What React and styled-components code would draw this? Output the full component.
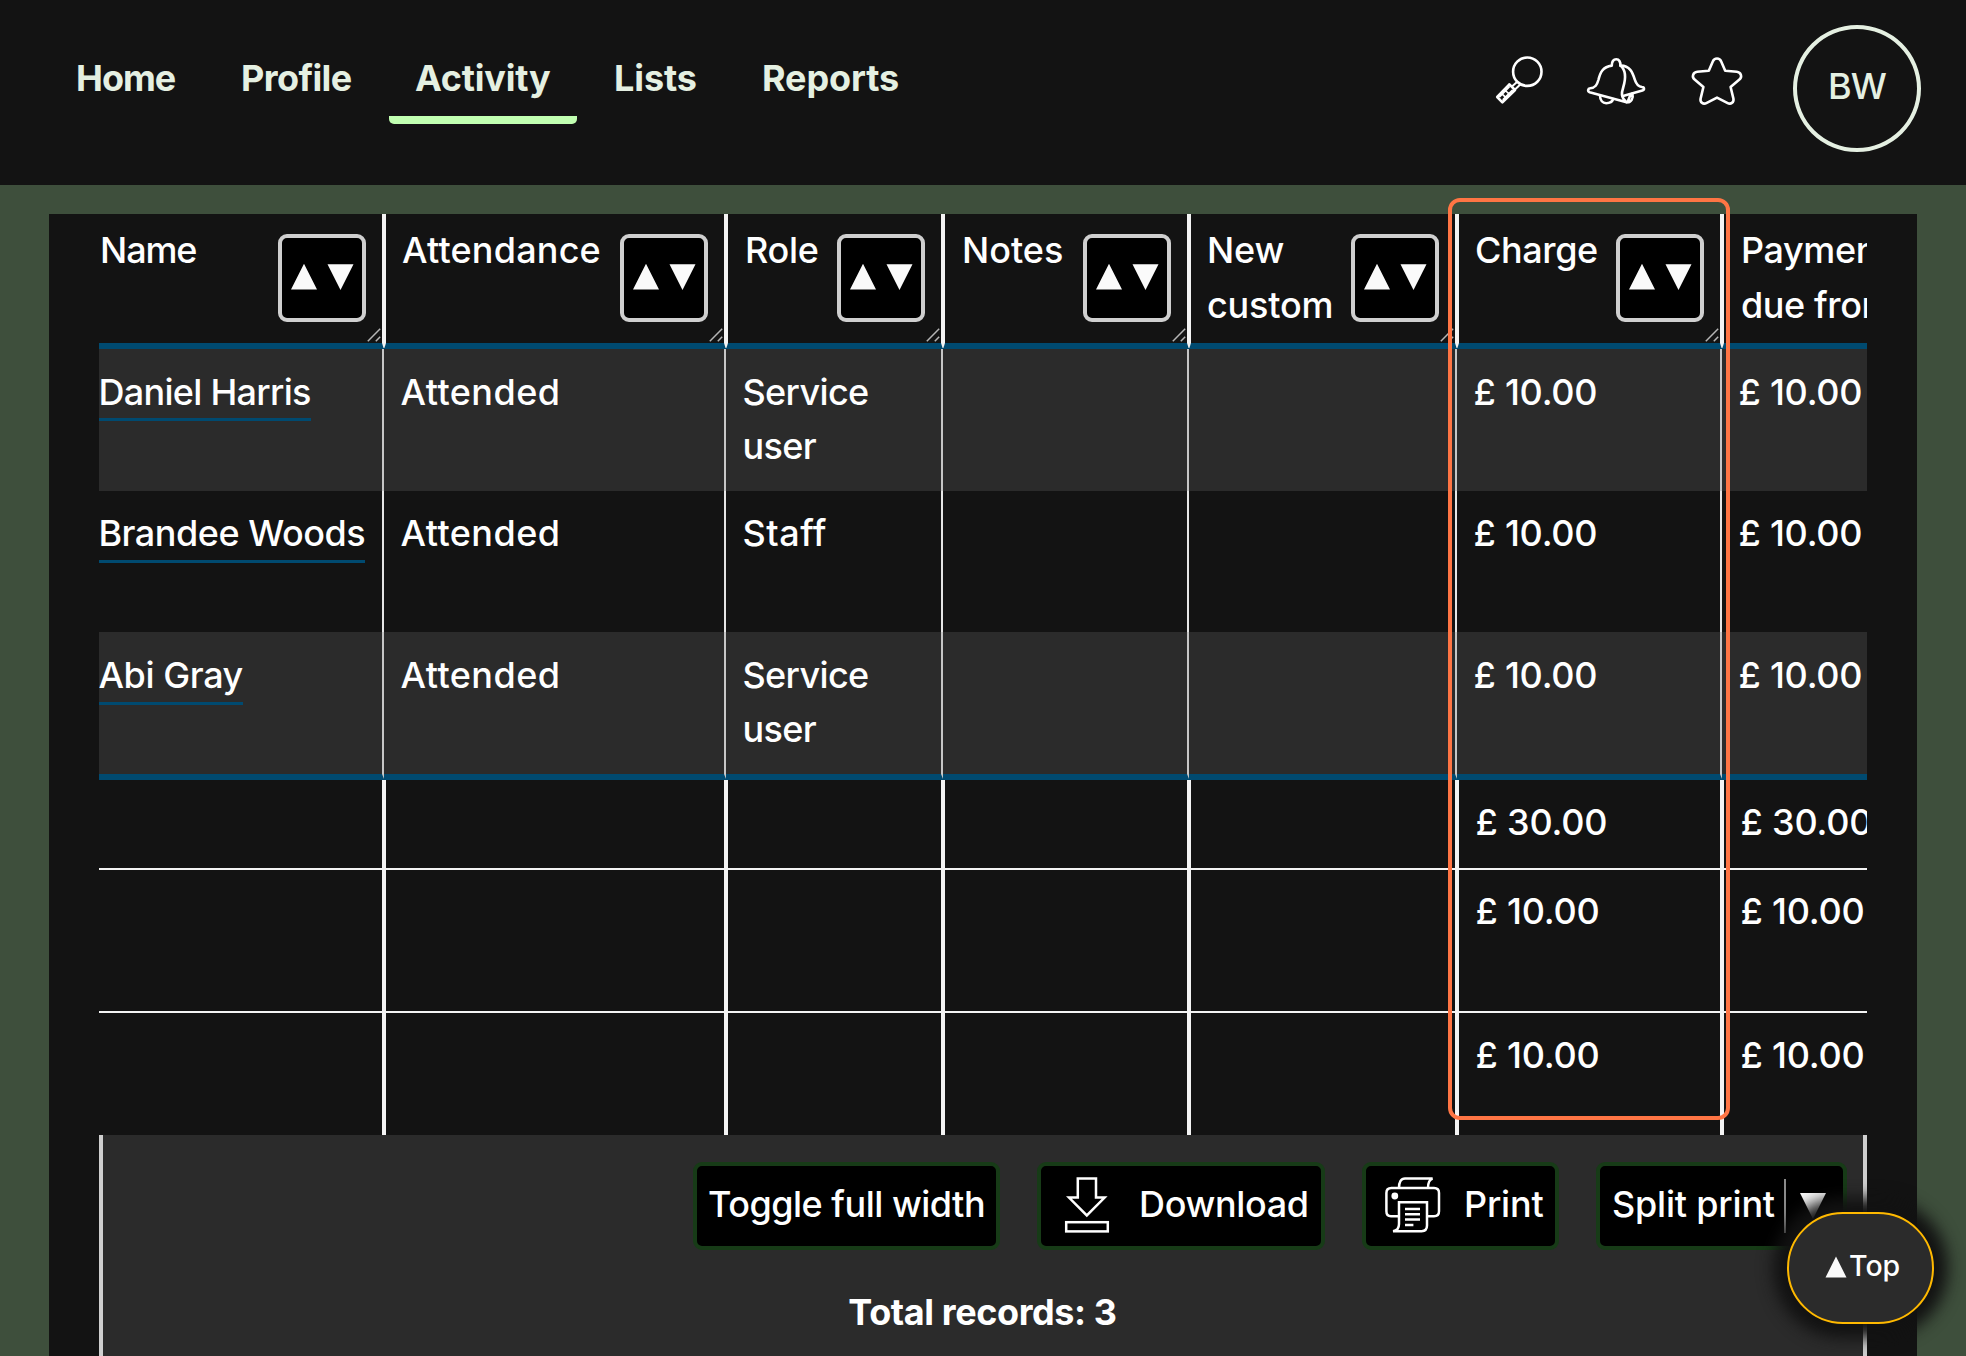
import React from "react";
import styled, { createGlobalStyle, css } from "styled-components";

const colors = {
  ink: "#131313",
  panel: "#2b2b2b",
  moss: "#3e4f3c",
  mint: "#e5f0e2",
  lime: "#c1ffb1",
  blue: "#004a70",
  line: "#f4f4f4",
  soft: "#cfcfcf",
  orange: "#ff7544",
  amber: "#ffb900",
};

const COLUMNS = "287px 342px 217px 246px 268px 265px 300px";
const BODY_COLUMNS = "285px 342px 217px 246px 268px 265px 302px";

const GlobalStyle = createGlobalStyle`
  *, *::before, *::after { box-sizing: border-box; }
  html, body { margin: 0; padding: 0; background: ${colors.moss}; }
  body { overflow: hidden; }
`;

const Page = styled.div`
  position: relative;
  width: 1966px;
  height: 1356px;
  overflow: hidden;
  background: ${colors.moss};
  color: #fff;
  font-family: Inter, "Liberation Sans", sans-serif;
  font-size: 36px;
  font-weight: 500;
  line-height: 54.4px;
`;

const TopBar = styled.header`
  display: flex;
  justify-content: space-between;
  align-items: flex-start;
  height: 185px;
  padding: 0 45px 0 50px;
  background: ${colors.ink};
  color: ${colors.mint};
`;

const Nav = styled.nav`
  display: grid;
  grid-template-columns: 165px 174px 199px 148px 200px;
  padding-top: 51px;
`;

const NavItem = styled.a`
  justify-self: start;
  height: 73px;
  padding: 0 26px;
  border-bottom: 8px solid ${(p) => (p.$active ? colors.lime : "transparent")};
  border-radius: 0 0 5px 5px;
  font-weight: 650;
  letter-spacing: ${(p) => p.$track || 0}px;
  white-space: nowrap;
  ${(p) => p.$active && css`width: 188px;`}
`;

const Tools = styled.div`
  display: grid;
  grid-template-columns: 90px 105px 103px 128px;
  padding-top: 25px;
`;

const ToolIcon = styled.svg`
  display: block;
  height: 52px;
  margin-top: 30px;
  fill: none;
  stroke: #fff;
  stroke-width: 2.6;
  stroke-linejoin: round;
  stroke-linecap: round;
`;

const Avatar = styled.div`
  display: flex;
  align-items: center;
  justify-content: center;
  width: 128px;
  height: 127px;
  padding-bottom: 4px;
  border: 4px solid ${colors.mint};
  border-radius: 50%;
  letter-spacing: -0.8px;
`;

const Card = styled.main`
  margin: 29px 49px 0;
  padding: 0 50px;
  background: ${colors.ink};
`;

const TableWindow = styled.div`
  width: 1768px;
  overflow: hidden;
`;

const HeadRow = styled.div`
  display: grid;
  grid-template-columns: ${COLUMNS};
  height: 135px;
  border-bottom: 6px solid ${colors.blue};
  line-height: 55px;
`;

const HeadCell = styled.div`
  position: relative;
  display: flex;
  justify-content: space-between;
  align-items: flex-start;
  padding: 8.6px 16px 0 ${(p) => (p.$first ? 1 : 16)}px;
  border-right: 4px solid ${colors.line};
  white-space: pre;

  &::after {
    content: "";
    position: absolute;
    top: 100%;
    right: -4px;
    width: 4px;
    height: 5px;
    background: ${colors.line};
    clip-path: polygon(0 0, 100% 0, 60% 100%, 40% 100%);
  }
`;

const HeadText = styled.span`
  padding-left: ${(p) => p.$nudge || 0}px;
  letter-spacing: ${(p) => p.$track || 0}px;
`;

const SortButton = styled.button`
  display: flex;
  flex: none;
  align-items: center;
  justify-content: center;
  width: 88px;
  height: 88px;
  margin: 11.4px 0 0;
  padding: 0 1px 1px 0;
  border: 4px solid ${colors.soft};
  border-radius: 9px;
  background: #000;
`;

const Arrows = styled.svg`
  display: block;
  fill: #fafafa;
`;

const Grip = styled.svg`
  position: absolute;
  right: 1px;
  bottom: 1px;
  stroke: #b5b5b5;
  stroke-width: 1.5;
`;

const BodyRow = styled.div`
  display: grid;
  grid-template-columns: ${BODY_COLUMNS};
  height: 141.667px;
  background: ${(p) => (p.$striped ? colors.panel : colors.ink)};

  & > div {
    border-right: 2px solid ${(p) => (p.$striped ? "#c6c6c6" : "#e6e6e6")};
  }
`;

const BodyCell = styled.div`
  padding: 15.6px 0 0 ${(p) => (p.$first ? 0 : 16.5)}px;
  letter-spacing: ${(p) => p.$track || 0}px;
  white-space: pre;
`;

const NameLink = styled.a`
  display: inline-block;
  height: 56.6px;
  border-bottom: 3px solid ${colors.blue};
  letter-spacing: ${(p) => p.$track}px;
  text-indent: -0.6px;
`;

const BlueRule = styled.div`
  display: grid;
  grid-template-columns: ${BODY_COLUMNS};
  height: 6px;
  background: ${colors.blue};
`;

const RuleTip = styled.i`
  justify-self: end;
  width: 2px;
  height: 5px;
  background: #c6c6c6;
  clip-path: polygon(0 0, 100% 0, 100% 100%);
`;

const FootRow = styled.div`
  display: grid;
  grid-template-columns: ${COLUMNS};
  height: ${(p) => p.$height}px;
  ${(p) => p.$ruled && css`border-bottom: 2px solid ${colors.line};`}
`;

const FootCell = styled.div`
  position: relative;
  padding: ${(p) => p.$top}px 0 0 16.5px;
  border-right: 4px solid ${colors.line};
  letter-spacing: -0.2px;
  white-space: pre;

  ${(p) => p.$ruled && css`
    &::after {
      content: "";
      position: absolute;
      top: 100%;
      right: -4px;
      width: 4px;
      height: 2px;
      background: ${colors.line};
    }
  `}
`;

const Panel = styled.section`
  height: 221px;
  padding: 27px 16px 0;
  border: solid ${colors.soft};
  border-width: 0 4px;
  background: ${colors.panel};
`;

const Actions = styled.div`
  display: flex;
  justify-content: flex-end;
  gap: 37px;
`;

const ActionButton = styled.button`
  display: flex;
  align-items: center;
  width: ${(p) => p.$width}px;
  height: 88px;
  margin: 0;
  padding: 0 0 0 ${(p) => p.$inset}px;
  border: 4px solid #173b17;
  border-radius: 9px;
  background: #000;
  color: #fff;
  font: inherit;
  text-align: left;
  white-space: nowrap;
`;

const ActionText = styled.span`
  padding: 0 0 3px ${(p) => p.$gap || 0}px;
  letter-spacing: ${(p) => p.$track || 0}px;
`;

const ActionIcon = styled.svg`
  display: block;
  flex: none;
  margin-bottom: 1px;
  fill: none;
  stroke: #fff;
  stroke-width: 2.5;
`;

const SplitArrow = styled.span`
  display: flex;
  align-items: center;
  height: 54px;
  margin-left: auto;
  padding: 0 17px 0 14px;
  border-left: 2px solid #8a8a8a;
`;

const Total = styled.div`
  margin-top: 35px;
  padding-right: 1px;
  font-weight: 700;
  letter-spacing: -0.4px;
  text-align: center;
`;

const Highlight = styled.div`
  position: absolute;
  top: 198px;
  left: 1448px;
  width: 282px;
  height: 922px;
  border: 4px solid ${colors.orange};
  border-radius: 12px;
  pointer-events: none;
`;

const TopButton = styled.button`
  position: absolute;
  top: 1212px;
  left: 1787px;
  display: flex;
  align-items: center;
  gap: 2px;
  width: 147px;
  height: 112px;
  padding: 0 0 2px 36px;
  border: 2px solid ${colors.amber};
  border-radius: 56px;
  background: ${colors.panel};
  box-shadow: 0 0 16px 14px #121212;
  color: #fff;
  font: inherit;
  font-size: 28.5px;
  letter-spacing: 0;
`;

const TopText = styled.span`
  padding-bottom: 1px;
`;

const heads = [
  { label: "Name", track: -1.1 },
  { label: "Attendance", track: 0.2 },
  { label: "Role", track: -0.3, nudge: 1 },
  { label: "Notes", track: 0, nudge: 1 },
  { label: "New\ncustom", track: -0.2 },
  { label: "Charge", track: -0.4 },
  { label: "Payment\ndue from", track: -0.4, nudge: 1 },
];

const people = [
  { name: "Daniel Harris", track: -0.7, role: "Service\nuser", roleTrack: -0.65 },
  { name: "Brandee Woods", track: -0.48, role: "Staff", roleTrack: 0.5 },
  { name: "Abi Gray", track: -0.4, role: "Service\nuser", roleTrack: -0.65 },
];

const totals = [
  { amount: "£ 30.00", height: 90, top: 15.2 },
  { amount: "£ 10.00", height: 143, top: 14.2 },
  { amount: "£ 10.00", height: 122, top: 15.2 },
];

function SortArrows() {
  return (
    <Arrows width="64" height="28" viewBox="0 0 64 28">
      <path d="M1 26.4 14 .8 27 26.4ZM37.5 1.2H63.5L50.5 27Z" />
    </Arrows>
  );
}

function ResizeGrip() {
  return (
    <Grip width="14" height="14" viewBox="0 0 14 14">
      <path d="M.8 13.2 13.2.8M8.8 13.2 13.2 8.8" />
    </Grip>
  );
}

function SearchIcon() {
  return (
    <ToolIcon width="50" viewBox="0 0 50 52">
      <circle cx="32.3" cy="16.7" r="14.2" />
      <path d="M22 27 17.5 31M25 29.8 20.5 34" strokeWidth="2" />
      <path d="M14.4 29.3 2.2 42 7.4 47.3 20 35Z" />
      <path
        d="M4.8 41.6 14.2 32M8.2 44.4 17.2 35.4M7.6 39.4 10.6 42.4M11 36 14 39"
        strokeWidth="1.7"
      />
    </ToolIcon>
  );
}

function BellIcon() {
  return (
    <ToolIcon width="62" viewBox="0 0 62 52">
      <path d="M26.8 10.6C26.6 6.5 28.6 4.3 31.3 4.3S35.6 6.8 35.4 10.6C40.8 15 40.8 24 38.2 32.5 36.6 37.5 35.4 42.5 41.6 47.2L4.6 37.2C2.4 36.4 2.8 33.4 5.2 33.2 10.4 32.8 12 29.8 13.4 25 15.2 17.6 17.6 11.8 26.8 10.6Z" />
      <path d="M35.4 10.6C44.8 10.4 47.6 17.4 49.8 24.6 51.2 29 53 31.6 57 32 59.6 32.2 59.6 35 57.4 35.6L38 41" />
      <path d="M15 40.6C15 45.4 17.8 48.2 21.2 48.2 24.8 48.2 27.4 46.6 28.2 44.2M41.6 47.2C46.2 48 48.6 43 47.4 38.6M43 46 45.4 40" />
    </ToolIcon>
  );
}

function StarIcon() {
  return (
    <ToolIcon width="54" viewBox="0 0 54 52">
      <path d="M22.8 6.4C24.4 2.6 29.6 2.6 31.2 6.4L35.2 15.8 46.8 16.8C51 17.2 52.6 22 49.4 24.6L40.6 32 43.4 43.6C44.2 47.6 40.8 49.8 37.2 47.8L27 42.6 16.8 47.8C13.2 49.8 9.8 47.6 10.6 43.6L13.4 32 4.6 24.6C1.4 22 3 17.2 7.2 16.8L18.8 15.8Z" />
    </ToolIcon>
  );
}

function DownloadIcon() {
  return (
    <ActionIcon width="56" height="56" viewBox="0 0 56 56">
      <path d="M18.8 1.6H37V20.6H45.6L27.8 38.4 10 20.6H18.8Z" />
      <rect x="7.2" y="45.2" width="41.6" height="9.2" />
    </ActionIcon>
  );
}

function PrinterIcon() {
  return (
    <ActionIcon width="64" height="56" viewBox="0 0 64 56">
      <path d="M18.6 39.2H11Q6.4 39.2 6.4 34.2V16Q6.4 11 11.4 11H54Q59 11 59 16V34.2Q59 39.2 54 39.2H47.5" />
      <path d="M19 11Q19 1.6 25 1.6H52.6Q48 3 48 11" />
      <path d="M19 25.2H47V48.6Q47 54.2 41.6 54.2H13Q19 53.4 19 47Z" />
      <circle cx="14.8" cy="19" r="3.4" fill="#fff" stroke="none" />
      <path d="M25 32H40M25 37.2H40M25 42.6H40M25 48H33.4" />
    </ActionIcon>
  );
}

export default function App() {
  return (
    <Page>
      <GlobalStyle />
      <TopBar>
        <Nav>
          <NavItem $track={-1}>Home</NavItem>
          <NavItem $track={-0.6}>Profile</NavItem>
          <NavItem $active $track={-0.2}>Activity</NavItem>
          <NavItem $track={-0.1}>Lists</NavItem>
          <NavItem $track={-0.1}>Reports</NavItem>
        </Nav>
        <Tools>
          <SearchIcon />
          <BellIcon />
          <StarIcon />
          <Avatar>BW</Avatar>
        </Tools>
      </TopBar>

      <Card>
        <TableWindow>
          <HeadRow>
            {heads.map((h, i) => (
              <HeadCell key={h.label} $first={i === 0}>
                <HeadText $track={h.track} $nudge={h.nudge}>{h.label}</HeadText>
                {i < 6 && (
                  <SortButton aria-label={`Sort by ${h.label}`}>
                    <SortArrows />
                  </SortButton>
                )}
                <ResizeGrip />
              </HeadCell>
            ))}
          </HeadRow>
          {people.map((p, i) => (
            <BodyRow key={p.name} $striped={i % 2 === 0}>
              <BodyCell $first>
                <NameLink $track={p.track}>{p.name}</NameLink>
              </BodyCell>
              <BodyCell $track={0.45}>Attended</BodyCell>
              <BodyCell $track={p.roleTrack}>{p.role}</BodyCell>
              <BodyCell />
              <BodyCell />
              <BodyCell $track={-0.25}>£ 10.00</BodyCell>
              <BodyCell $track={-0.25}>£ 10.00</BodyCell>
            </BodyRow>
          ))}
          <BlueRule>
            {heads.map((h) => (
              <RuleTip key={h.label} />
            ))}
          </BlueRule>
          {totals.map((t, i) => (
            <FootRow key={i} $height={t.height} $ruled={i < 2}>
              {heads.map((h, c) => (
                <FootCell key={h.label} $top={t.top} $ruled={i < 2}>
                  {c > 4 ? t.amount : ""}
                </FootCell>
              ))}
            </FootRow>
          ))}
        </TableWindow>

        <Panel>
          <Actions>
            <ActionButton $width={307} $inset={11}>
              <ActionText $track={-0.5}>Toggle full width</ActionText>
            </ActionButton>
            <ActionButton $width={288} $inset={18}>
              <DownloadIcon />
              <ActionText $gap={24} $track={-0.35}>Download</ActionText>
            </ActionButton>
            <ActionButton $width={197} $inset={14}>
              <PrinterIcon />
              <ActionText $gap={20} $track={-0.2}>Print</ActionText>
            </ActionButton>
            <ActionButton $width={251} $inset={12}>
              <ActionText $track={-0.2}>Split print</ActionText>
              <SplitArrow>
                <Arrows width="26" height="26" viewBox="0 0 26 26">
                  <path d="M0 0H26L13 26Z" />
                </Arrows>
              </SplitArrow>
            </ActionButton>
          </Actions>
          <Total>Total records: 3</Total>
        </Panel>
      </Card>

      <Highlight />
      <TopButton>
        <Arrows width="22" height="22" viewBox="0 0 22 22">
          <path d="M.5 21.5 11 .5 21.5 21.5Z" />
        </Arrows>
        <TopText>Top</TopText>
      </TopButton>
    </Page>
  );
}
